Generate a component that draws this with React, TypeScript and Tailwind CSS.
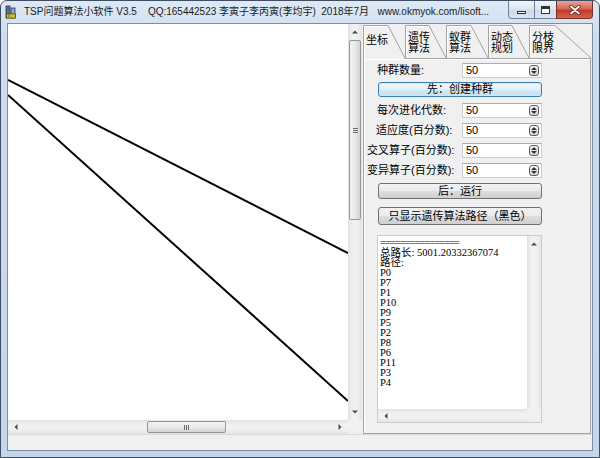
import React from "react";

type Dir = "up" | "down" | "left" | "right";

function Arrow({ dir }: { dir: Dir }) {
  const v = dir === "up" || dir === "down";
  const d = {
    up: "M0 3.5 L3 0.5 L6 3.5 Z",
    down: "M0 0.5 L3 3.5 L6 0.5 Z",
    left: "M3.5 0 L0.5 3 L3.5 6 Z",
    right: "M0.5 0 L3.5 3 L0.5 6 Z",
  }[dir];
  return (
    <svg width={v ? 6 : 4} height={v ? 4 : 6} viewBox={v ? "0 0 6 4" : "0 0 4 6"}>
      <path d={d} fill="#4a4a4a" />
    </svg>
  );
}

function VScroll({ thumb }: { thumb?: boolean }) {
  return (
    <div className="w-[14px] h-full flex flex-col bg-[linear-gradient(90deg,#e2e2e2,#f1f1f1_35%,#f1f1f1_65%,#e4e4e4)]">
      <div className="h-[16px] flex items-center justify-center">
        <Arrow dir="up" />
      </div>
      {thumb && (
        <div className="h-[180px] mx-[1px] rounded-[2px] border border-[#959595] bg-[linear-gradient(90deg,#f4f4f4,#e9e9e9_50%,#d4d4d4)] flex flex-col items-center justify-center gap-[1px]">
          <div className="w-[5px] h-[1px] bg-[#6a6a6a]" />
          <div className="w-[5px] h-[1px] bg-[#6a6a6a]" />
          <div className="w-[5px] h-[1px] bg-[#6a6a6a]" />
        </div>
      )}
      <div className="flex-1" />
      {thumb && (
        <div className="h-[16px] flex items-center justify-center">
          <Arrow dir="down" />
        </div>
      )}
    </div>
  );
}

function HScroll({ thumb }: { thumb?: boolean }) {
  return (
    <div className="flex-1 h-full flex items-stretch bg-[linear-gradient(180deg,#e2e2e2,#f1f1f1_35%,#f1f1f1_65%,#e4e4e4)]">
      <div className="w-[16px] flex items-center justify-center">
        <Arrow dir="left" />
      </div>
      {thumb && (
        <>
          <div className="w-[123px]" />
          <div className="w-[79px] my-[1px] rounded-[2px] border border-[#959595] bg-[linear-gradient(180deg,#f4f4f4,#e9e9e9_50%,#d4d4d4)] flex items-center justify-center gap-[1px]">
            <div className="w-[1px] h-[5px] bg-[#6a6a6a]" />
            <div className="w-[1px] h-[5px] bg-[#6a6a6a]" />
            <div className="w-[1px] h-[5px] bg-[#6a6a6a]" />
          </div>
        </>
      )}
      <div className="flex-1" />
      {thumb && (
        <div className="w-[16px] flex items-center justify-center">
          <Arrow dir="right" />
        </div>
      )}
    </div>
  );
}

function Spin() {
  return (
    <div className="w-[10px] h-[11px] rounded-[3px] border border-[#5c5c5c] bg-[linear-gradient(180deg,#fafafa,#d8d8d8)] flex flex-col items-center justify-center gap-[1px]">
      <svg width="6" height="3" viewBox="0 0 6 3">
        <path d="M0 3 L3 0 L6 3 Z" fill="#333" />
      </svg>
      <svg width="6" height="3" viewBox="0 0 6 3">
        <path d="M0 0 L3 3 L6 0 Z" fill="#333" />
      </svg>
    </div>
  );
}

function Row({ label, pad, mt }: { label: string; pad: string; mt: string }) {
  return (
    <div className={`flex items-center h-[15px] ${mt}`}>
      <div className={`w-[98px] text-[11px] leading-none whitespace-pre ${pad}`}>{label}</div>
      <div className="w-[80px] h-[15px] bg-white border border-[#c9ced6] border-t-[#a9adb5] flex items-center pl-[3px] pr-[2px]">
        <span className="flex-1 text-[11px] leading-none">50</span>
        <Spin />
      </div>
    </div>
  );
}

function Btn({ children, cls }: { children: React.ReactNode; cls: string }) {
  return (
    <div
      className={`ml-[14px] w-[164px] rounded-[3px] border flex items-center justify-center text-[11px] leading-none ${cls}`}
    >
      {children}
    </div>
  );
}

const tabs = [
  { a: "坐标", w: 42, d: 17, sel: true },
  { a: "遗传", b: "算法", w: 41, d: 17 },
  { a: "蚁群", b: "算法", w: 42, d: 17 },
  { a: "动态", b: "规划", w: 41, d: 17 },
  { a: "分枝", b: "限界", w: 62, d: 36 },
];

function TabStrip() {
  return (
    <div className="flex h-[33px] items-start">
      {tabs.map((t) => (
        <div
          key={t.a}
          className={`relative shrink-0 ${t.sel ? "z-10 h-[34px] bg-[#f0f0f0]" : "h-[33px]"}`}
          style={{ width: t.w }}
        >
          <svg className="absolute inset-0" width={t.w} height={t.sel ? 34 : 33}>
            <path
              d={`M0.5 ${t.sel ? 34 : 33} V0.5 H${t.w - t.d} L${t.w} 33`}
              fill="none"
              stroke="#a3a3a3"
            />
            <path d={`M1.5 ${t.sel ? 34 : 32} V1.5 H${t.w - t.d - 0.5}`} fill="none" stroke="#ffffff" />
          </svg>
          {t.sel ? (
            <div className="relative pl-[3px] pt-[9px] text-[11px] leading-[12px]">{t.a}</div>
          ) : (
            <div className="relative pl-[3px] pt-[7px] text-[11px] leading-[11px]">
              <div>{t.a}</div>
              <div>{t.b}</div>
            </div>
          )}
        </div>
      ))}
    </div>
  );
}

const output = [
  "总路长: 5001.20332367074",
  "路径:",
  "P0",
  "P7",
  "P1",
  "P10",
  "P9",
  "P5",
  "P2",
  "P8",
  "P6",
  "P11",
  "P3",
  "P4",
];

function Panel() {
  return (
    <div className="flex-1 flex flex-col border border-[#a3a3a3] shadow-[inset_1px_1px_0_#ffffff]">
      <Row label="种群数量:" pad="pl-[13px]" mt="mt-[4px]" />
      <Btn cls="mt-[4px] h-[15px] border-[#3c7fb1] bg-[linear-gradient(180deg,#f2f8fc_0%,#e3f1fa_50%,#d2e8f6_51%,#c5e1f3_100%)] shadow-[inset_0_0_0_1px_#cbe7fb]">
        先：创建种群
      </Btn>
      <Row label="每次进化代数:" pad="pl-[13px]" mt="mt-[6px]" />
      <Row label="适应度(百分数):" pad="pl-[12px]" mt="mt-[5px]" />
      <Row label="交叉算子(百分数):" pad="pl-[3px]" mt="mt-[5px]" />
      <Row label="变异算子(百分数):" pad="pl-[3px]" mt="mt-[5px]" />
      <Btn cls="mt-[5px] h-[16px] border-[#707070] bg-[linear-gradient(180deg,#f2f2f2_0%,#ebebeb_50%,#dddddd_51%,#cfcfcf_100%)]">
        后：运行
      </Btn>
      <Btn cls="mt-[8px] h-[18px] border-[#707070] bg-[linear-gradient(180deg,#f2f2f2_0%,#ebebeb_50%,#dddddd_51%,#cfcfcf_100%)]">
        只显示遗传算法路径（黑色）
      </Btn>
      <div className="mt-[10px] ml-[13px] w-[165px] h-[188px] border border-[#c9ced6] flex flex-col">
        <div className="flex flex-1 min-h-0">
          <div className="flex-1 bg-white pl-[2px] pt-[2px] font-['Liberation_Serif','Noto_Sans_CJK_SC',serif] text-[10.5px] leading-[10px] whitespace-pre">
            <div className="tracking-[-1px]">================</div>
            {output.map((l, i) => (
              <div key={i}>{l}</div>
            ))}
          </div>
          <VScroll />
        </div>
        <div className="h-[13px] flex">
          <HScroll />
          <div className="w-[14px] bg-[#f0f0f0]" />
        </div>
      </div>
    </div>
  );
}

function AppIcon() {
  return (
    <svg width="12" height="14" viewBox="0 0 12 14">
      <rect x="1" y="1" width="4" height="12" fill="#5a6f95" stroke="#27324a" strokeWidth="0.8" />
      <rect x="6" y="3" width="4" height="10" fill="#8fa8cf" stroke="#27324a" strokeWidth="0.8" />
      <rect x="1.5" y="9" width="9" height="4" fill="#d8c22a" stroke="#5b4e10" strokeWidth="0.8" />
      <rect x="3" y="10" width="2" height="2" fill="#6aa82e" />
    </svg>
  );
}

function TitleBar() {
  return (
    <div className="h-[22px] flex items-start shrink-0">
      <div className="h-[22px] flex items-center pl-[4px] min-w-0 overflow-hidden">
        <AppIcon />
        <span className="ml-[7px] text-[10px] leading-none whitespace-pre text-[#1b1b1b]">
          {"TSP问题算法小软件 V3.5    QQ:165442523 李寅子李丙寅(李均宇)  2018年7月   www.okmyok.com/lisoft..."}
        </span>
      </div>
      <div className="ml-auto mr-[6px] flex h-[18px] shrink-0">
        <div className="w-[27px] h-full rounded-bl-[4px] border border-t-0 border-[#6e7f96] bg-[linear-gradient(180deg,#f1f5fa,#dbe5f1_50%,#c9d8ea_51%,#d8e4f2)] flex items-center justify-center">
          <div className="mt-[5px] w-[9px] h-[3px] border border-[#333] bg-white" />
        </div>
        <div className="w-[21px] h-full border-b border-[#6e7f96] bg-[linear-gradient(180deg,#f1f5fa,#dbe5f1_50%,#c9d8ea_51%,#d8e4f2)] flex items-center justify-center">
          <div className="w-[9px] h-[8px] border border-t-[3px] border-[#333] bg-white" />
        </div>
        <div className="w-[37px] h-full rounded-br-[4px] border border-t-0 border-[#7a2e27] bg-[linear-gradient(180deg,#e8a495,#d46a59_45%,#c0392a_55%,#d4624f)] flex items-center justify-center">
          <svg width="12" height="10" viewBox="0 0 12 10">
            <path d="M2 1.5 L10 8.5 M10 1.5 L2 8.5" stroke="#5a1f19" strokeWidth="3.4" strokeLinecap="round" />
            <path d="M2 1.5 L10 8.5 M10 1.5 L2 8.5" stroke="#ffffff" strokeWidth="1.8" strokeLinecap="round" />
          </svg>
        </div>
      </div>
    </div>
  );
}

export default function App() {
  return (
    <div className="w-[600px] h-[458px] font-['Liberation_Sans','Noto_Sans_CJK_SC',sans-serif] text-black">
      <div className="w-full h-full flex flex-col border border-[#3f4e62] rounded-t-[7px] overflow-hidden bg-[linear-gradient(180deg,#dfe9f5_0%,#cddcee_8%,#c3d6ec_100%)]">
        <TitleBar />
        <div className="mx-[6px] h-[428px] shrink-0 border border-[#7d8da2] bg-[#f0f0f0] flex flex-col">
          <div className="flex h-[410px]">
            <div className="w-[354px] flex flex-col">
              <div className="flex h-[396px]">
                <div className="w-[340px] h-full bg-white">
                  <svg width="340" height="396">
                    <line x1="0" y1="56" x2="340" y2="229" stroke="#000" strokeWidth="2" />
                    <line x1="0" y1="71" x2="340" y2="377" stroke="#000" strokeWidth="2" />
                  </svg>
                </div>
                <VScroll thumb />
              </div>
              <div className="flex h-[14px]">
                <HScroll thumb />
                <div className="w-[14px] bg-[#f0f0f0]" />
              </div>
            </div>
            <div className="ml-[1px] w-[228px] pt-[1px] flex flex-col">
              <TabStrip />
              <Panel />
            </div>
          </div>
          <div className="flex-1 border-t border-[#dadada]" />
        </div>
      </div>
    </div>
  );
}
